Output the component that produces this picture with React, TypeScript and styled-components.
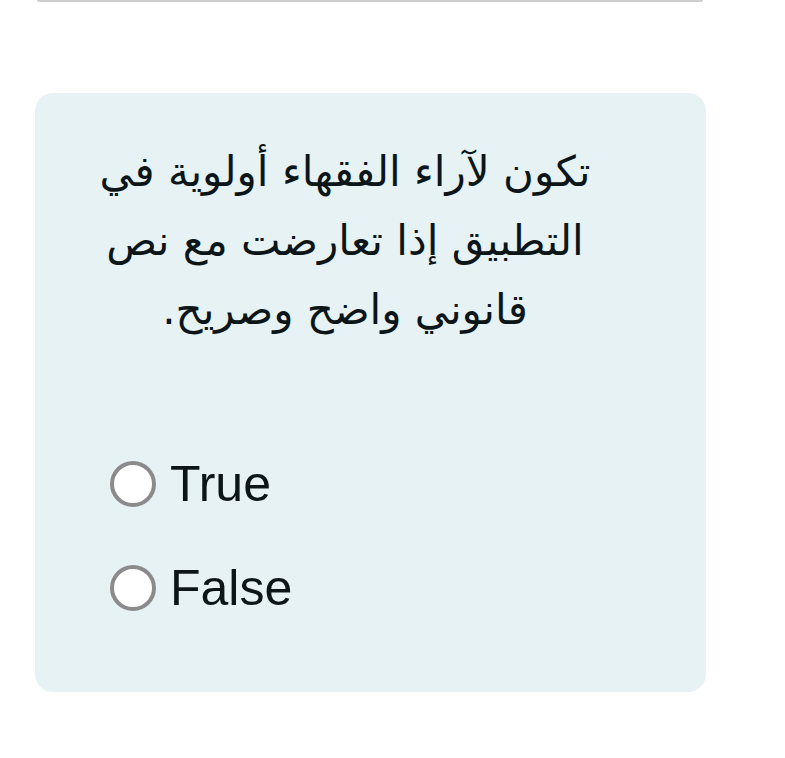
import { FC } from 'react'
import styled, { createGlobalStyle } from 'styled-components'

const GlobalStyle = createGlobalStyle`
  html, body {
    margin: 0;
    padding: 0;
    background: #ffffff;
  }
  body {
    font-family: 'Liberation Sans', Arial, sans-serif;
  }
`

const Page = styled.div`
  width: 785px;
  height: 758px;
  padding: 0 0 0 35px;
  box-sizing: border-box;
  overflow: hidden;
`

const PrevEdge = styled.div`
  width: 666px;
  height: 2px;
  margin-left: 2px;
  background: #cdcdcd;
  border-radius: 0 0 2px 2px;
`

const Card = styled.div`
  width: 671px;
  height: 599px;
  margin-top: 91px;
  background: #e6f2f4;
  border-radius: 18px;
  padding: 44px 0 0 55px;
  box-sizing: border-box;
`

const Question = styled.p`
  width: 510px;
  margin: 0;
  direction: rtl;
  text-align: center;
  font-family: 'DejaVu Sans', 'Noto Sans', sans-serif;
  font-size: 42px;
  line-height: 69px;
  color: #0c1518;
`

const Options = styled.div`
  display: flex;
  flex-direction: column;
  gap: 56px;
  margin-top: 116px;
  padding-left: 20px;
`

const Option = styled.label`
  display: flex;
  align-items: center;
  gap: 14px;
  height: 48px;
  font-size: 50px;
  color: #0c1518;
  cursor: pointer;
`

const Radio = styled.span`
  width: 38px;
  height: 38px;
  border: 4px solid #8b8b8b;
  border-radius: 50%;
  background: #ffffff;
  flex: none;
`

const choices = ['True', 'False']

const App: FC = () => {
  return (
    <>
      <GlobalStyle />
      <Page>
        <PrevEdge />
        <Card>
          <Question>
            تكون لآراء الفقهاء أولوية في
            <br />
            التطبيق إذا تعارضت مع نص
            <br />
            قانوني واضح وصريح.
          </Question>
          <Options>
            {choices.map((c) => (
              <Option key={c}>
                <Radio />
                {c}
              </Option>
            ))}
          </Options>
        </Card>
      </Page>
    </>
  )
}

export default App
